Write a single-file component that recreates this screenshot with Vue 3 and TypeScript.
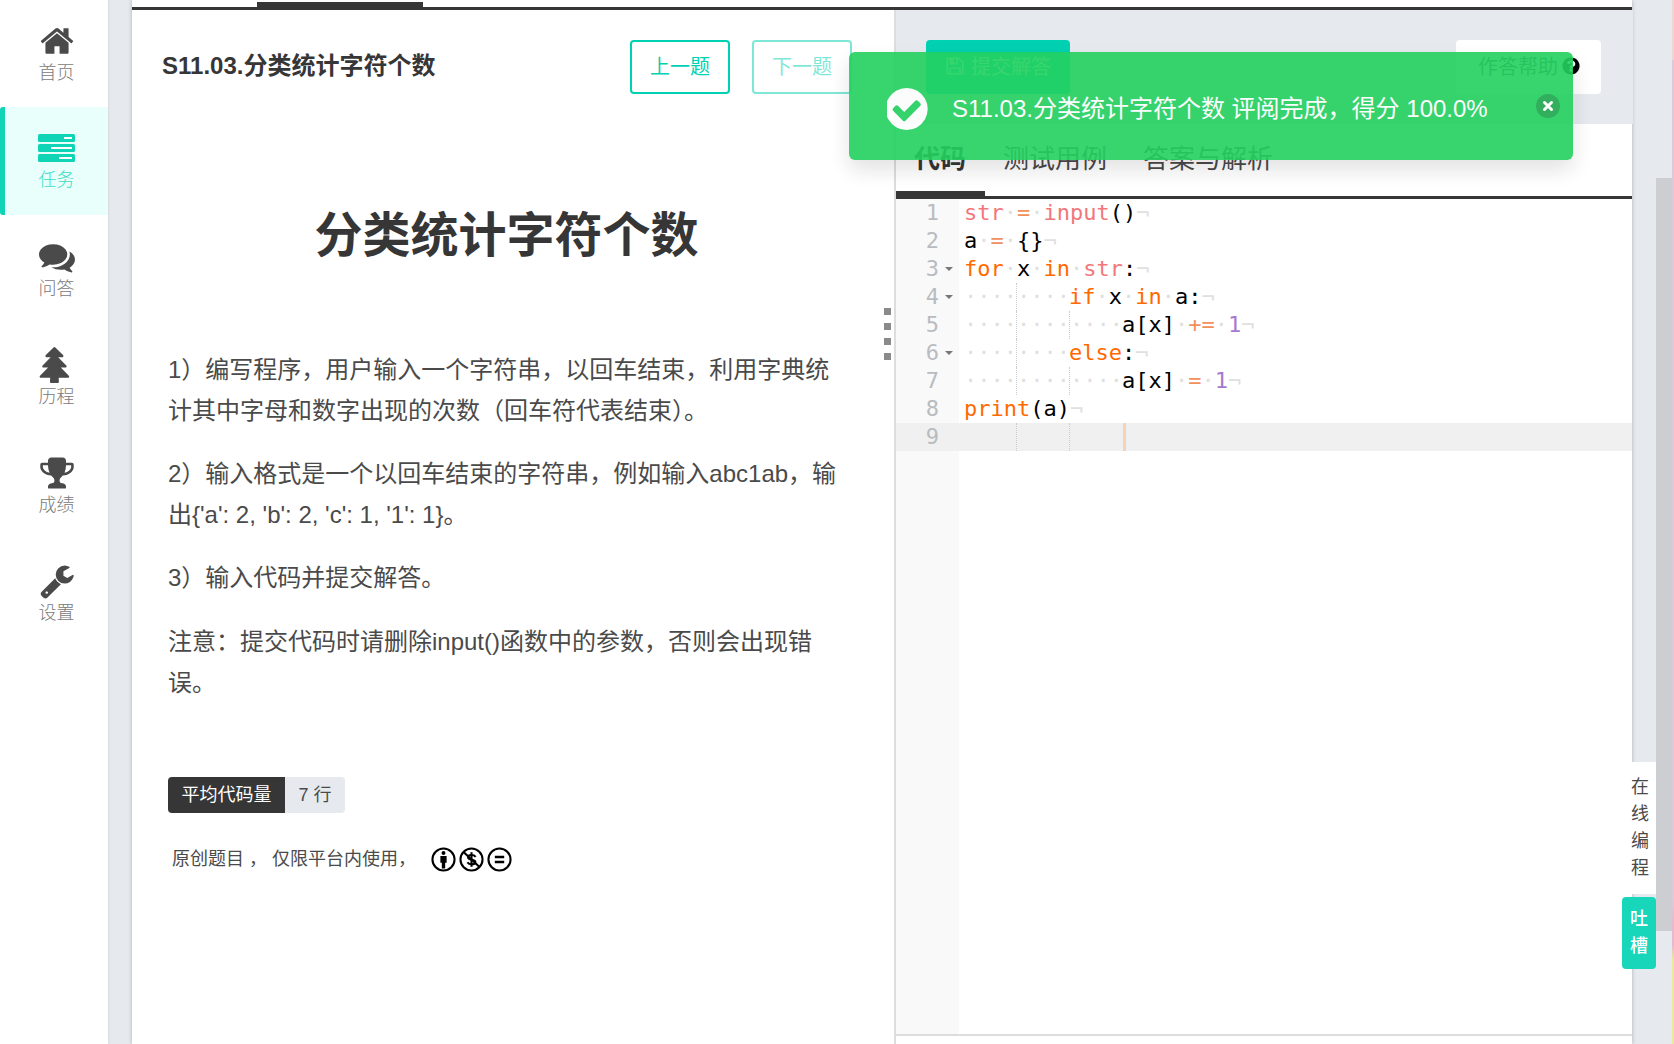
<script setup lang="ts">
interface NavItem { label: string; icon: string; active?: boolean }
const paths: Record<string, string> = {
  home: 'M1472 992v480q0 26-19 45t-45 19h-384v-384h-256v384h-384q-26 0-45-19t-19-45v-480q0-1 .5-3t.5-3l575-474 575 474q1 2 1 6zm223-69l-62 74q-8 9-21 11h-3q-13 0-21-7l-692-577-692 577q-12 8-24 7-13-2-21-11l-62-74q-8-10-7-23.5t11-21.5l719-599q32-26 76-26t76 26l244 204v-195q0-14 9-23t23-9h192q14 0 23 9t9 23v408l219 182q10 8 11 21.5t-7 23.5z',
  comments: 'M1408 768q0 139-94 257t-256.5 186.5-353.5 68.5q-86 0-176-16-124 88-278 128-36 9-86 16h-3q-11 0-20.5-8t-11.5-21q-1-3-1-6.5t.5-6.5 2-6l2.5-5 3.5-5.5 4-5 4.5-5 4-4.5q5-6 23-25t26-29.5 22.5-29 25-38.5 20.5-44q-124-72-195-177t-71-224q0-139 94-257t256.5-186.5 353.5-68.5 353.5 68.5 256.5 186.5 94 257zm384 256q0 120-71 224.5t-195 176.5q10 24 20.5 44t25 38.5 22.5 29 26 29.5 23 25q1 1 4 4.5t4.5 5 4 5 3.5 5.5l2.5 5 2 6 .5 6.5-1 6.5q-3 14-13 22t-22 7q-50-7-86-16-154-40-278-128-90 16-176 16-271 0-472-132 58 4 88 4 161 0 309-45t264-129q125-92 192-212t67-254q0-77-23-152 129 71 204 178t75 230z',
  tree: 'M1504 1472q0 26-19 45t-45 19h-462q1 17 6 87.5t5 108.5q0 25-18 42.5t-43 17.5h-320q-25 0-43-17.5t-18-42.5q0-38 5-108.5t6-87.5h-462q-26 0-45-19t-19-45 19-45l402-403h-229q-26 0-45-19t-19-45 19-45l402-403h-197q-26 0-45-19t-19-45 19-45l384-384q19-19 45-19t45 19l384 384q19 19 19 45t-19 45-45 19h-197l402 403q19 19 19 45t-19 45-45 19h-229l402 403q19 19 19 45z',
  trophy: 'M522 883q-74-162-74-371h-256v96q0 78 94.5 162t235.5 113zm1078-275v-96h-256q0 209-74 371 141-29 235.5-113t94.5-162zm128-128v128q0 71-41.5 143t-112 130-173 97.5-215.5 44.5q-42 54-95 95-38 34-52.5 72.5t-14.5 89.5q0 54 30.5 91t97.5 37q75 0 133.5 45.5t58.5 114.5v64q0 14-9 23t-23 9h-832q-14 0-23-9t-9-23v-64q0-69 58.5-114.5t133.5-45.5q67 0 97.5-37t30.5-91q0-51-14.5-89.5t-52.5-72.5q-53-41-95-95-113-5-215.5-44.5t-173-97.5-112-130-41.5-143v-128q0-40 28-68t68-28h288v-96q0-66 47-113t113-47h576q66 0 113 47t47 113v96h288q40 0 68 28t28 68z',
  wrench: 'M448 1472q0-26-19-45t-45-19-45 19-19 45 19 45 45 19 45-19 19-45zm644-420l-682 682q-37 37-90 37-52 0-91-37l-106-108q-38-36-38-90 0-53 38-91l681-681q39 98 114.5 173.5t173.5 114.5zm634-435q0 39-23 106-47 134-164.5 217.5t-258.5 83.5q-185 0-316.5-131.5t-131.5-316.5 131.5-316.5 316.5-131.5q58 0 121.5 16.5t107.5 46.5q16 11 16 28t-16 28l-293 169v224l193 107q5-3 79-48.5t135.5-81 70.5-35.5q15 0 23.5 10t8.5 25z',
}
const save = 'M512 1536h768v-384h-768v384zm896 0h128v-896q0-14-10-38.5t-20-34.5l-281-281q-10-10-34-20t-39-10v416q0 40-28 68t-68 28h-576q-40 0-68-28t-28-68v-416h-128v1280h128v-416q0-40 28-68t68-28h832q40 0 68 28t28 68v416zm-384-928v-320q0-13-9.5-22.5t-22.5-9.5h-192q-13 0-22.5 9.5t-9.5 22.5v320q0 13 9.5 22.5t22.5 9.5h192q13 0 22.5-9.5t9.5-22.5zm640 32v928q0 40-28 68t-68 28h-1344q-40 0-68-28t-28-68v-1344q0-40 28-68t68-28h928q40 0 88 20t76 48l280 280q28 28 48 76t20 88z'
const checkCircle = 'M1412 734q0-28-18-46l-91-90q-19-19-45-19t-45 19l-408 407-226-226q-19-19-45-19t-45 19l-91 90q-18 18-18 46 0 27 18 45l362 362q19 19 45 19 27 0 46-19l543-543q18-18 18-45zm252 162q0 209-103 385.5t-279.5 279.5-385.5 103-385.5-103-279.5-279.5-103-385.5 103-385.5 279.5-279.5 385.5-103 385.5 103 279.5 279.5 103 385.5z'
const question = 'M1024 1376v-192q0-14-9-23t-23-9h-192q-14 0-23 9t-9 23v192q0 14 9 23t23 9h192q14 0 23-9t9-23zm256-672q0-88-55.5-163t-138.5-116-170-41q-243 0-371 213-15 24 8 42l132 100q7 6 19 6 16 0 25-12 53-68 86-92 34-24 86-24 48 0 85.5 26t37.5 59q0 38-20 61t-68 45q-63 28-115.5 86.5t-52.5 125.5v36q0 14 9 23t23 9h192q14 0 23-9t9-23q0-19 21.5-49.5t54.5-49.5q32-18 49-28.5t46-35 44.5-48 28-60.5 12.5-81zm384 192q0 209-103 385.5t-279.5 279.5-385.5 103-385.5-103-279.5-279.5-103-385.5 103-385.5 279.5-279.5 385.5-103 385.5 103 279.5 279.5 103 385.5z'

const nav: NavItem[] = [
  { label: '首页', icon: 'home' },
  { label: '任务', icon: 'tasks', active: true },
  { label: '问答', icon: 'comments' },
  { label: '历程', icon: 'tree' },
  { label: '成绩', icon: 'trophy' },
  { label: '设置', icon: 'wrench' },
]

type Tok = { t: string; c?: string }
interface Line { n: number; fold?: boolean; guides: number; toks: Tok[]; active?: boolean; end?: boolean }
const dot: Tok = { t: '·', c: 'inv' }
const lines: Line[] = [
  { n: 1, guides: 0, end: true, toks: [{ t: 'str', c: 'var' }, dot, { t: '=', c: 'op' }, dot, { t: 'input', c: 'var' }, { t: '()' }] },
  { n: 2, guides: 0, end: true, toks: [{ t: 'a' }, dot, { t: '=', c: 'op' }, dot, { t: '{}' }] },
  { n: 3, fold: true, guides: 0, end: true, toks: [{ t: 'for', c: 'kw' }, dot, { t: 'x' }, dot, { t: 'in', c: 'kw' }, dot, { t: 'str', c: 'var' }, { t: ':' }] },
  { n: 4, fold: true, guides: 2, end: true, toks: [{ t: 'if', c: 'kw' }, dot, { t: 'x' }, dot, { t: 'in', c: 'kw' }, dot, { t: 'a' }, { t: ':' }] },
  { n: 5, guides: 3, end: true, toks: [{ t: 'a[x]' }, dot, { t: '+=', c: 'op' }, dot, { t: '1', c: 'num' }] },
  { n: 6, fold: true, guides: 2, end: true, toks: [{ t: 'else', c: 'kw' }, { t: ':' }] },
  { n: 7, guides: 3, end: true, toks: [{ t: 'a[x]' }, dot, { t: '=', c: 'op' }, dot, { t: '1', c: 'num' }] },
  { n: 8, guides: 0, end: true, toks: [{ t: 'print', c: 'kw' }, { t: '(a)' }] },
  { n: 9, guides: 3, active: true, toks: [] },
]
</script>

<template>
  <div class="page">
    <aside class="sidebar">
      <a v-for="item in nav" :key="item.label" class="nav-item" :class="{ active: item.active }">
        <svg v-if="item.icon === 'tasks'" class="nav-icon tasks" viewBox="0 0 37 28">
          <rect x="0" y="0" width="37" height="8" rx="1.5" />
          <rect x="0" y="10" width="37" height="8" rx="1.5" />
          <rect x="0" y="20" width="37" height="8" rx="1.5" />
          <rect x="26" y="3" width="8" height="2" fill="#fff" />
          <rect x="13" y="13" width="21" height="2" fill="#fff" />
          <rect x="21" y="23" width="13" height="2" fill="#fff" />
        </svg>
        <svg v-else class="nav-icon" viewBox="0 0 1792 1792"><path :d="paths[item.icon]" /></svg>
        <span class="nav-label">{{ item.label }}</span>
      </a>
    </aside>

    <main class="main">
      <div class="top-strip"><span class="top-active"></span></div>
      <div class="panels">
        <section class="left">
          <header class="left-head">
            <h2 class="task-title">S11.03.分类统计字符个数</h2>
            <button class="btn outline">上一题</button>
            <button class="btn outline faded">下一题</button>
          </header>
          <h1 class="problem-title">分类统计字符个数</h1>
          <div class="problem">
            <p>1）编写程序，用户输入一个字符串，以回车结束，利用字典统计其中字母和数字出现的次数（回车符代表结束）。</p>
            <p>2）输入格式是一个以回车结束的字符串，例如输入abc1ab，输出{'a': 2, 'b': 2, 'c': 1, '1': 1}。</p>
            <p>3）输入代码并提交解答。</p>
            <p>注意：提交代码时请删除input()函数中的参数，否则会出现错误。</p>
          </div>
          <div class="tags"><span class="tag dark">平均代码量</span><span class="tag light">7 行</span></div>
          <div class="license">
            <span class="license-text">原创题目 ， 仅限平台内使用，</span>
            <svg class="cc" viewBox="0 0 24 24">
              <circle cx="12" cy="12" r="10.6" />
              <circle cx="12" cy="5.8" r="1.9" class="solid" />
              <path class="solid" d="M9 8.6h6v6.4h-1.4v5.6h-3.2V15H9z" />
            </svg>
            <svg class="cc" viewBox="0 0 24 24">
              <circle cx="12" cy="12" r="10.6" />
              <path d="M4.6 5 19.4 19" />
              <path d="M16 9.4c-1-1.3-2.4-1.8-4-1.8-1.8 0-3.3.8-3.3 2.3 0 3.2 7 1.4 7 4.4 0 1.5-1.6 2.3-3.5 2.3-1.7 0-3.3-.7-4.1-2" />
              <path d="M12 5v14" />
            </svg>
            <svg class="cc" viewBox="0 0 24 24">
              <circle cx="12" cy="12" r="10.6" />
              <path d="M7.5 9.6h9M7.5 14.4h9" stroke-width="2.4" />
            </svg>
          </div>
          <div class="handle"><i></i><i></i><i></i><i></i></div>
        </section>

        <section class="right">
          <div class="toolbar">
            <button class="btn primary">
              <svg class="btn-icon" viewBox="0 0 1792 1792"><path :d="save" /></svg>提交解答
            </button>
            <button class="btn help">
              作答帮助<svg class="help-icon" viewBox="0 0 1792 1792"><path :d="question" /></svg>
            </button>
          </div>
          <nav class="tabs">
            <span class="tab current">代码</span>
            <span class="tab">测试用例</span>
            <span class="tab">答案与解析</span>
          </nav>
          <div class="editor">
            <div class="gutter">
              <div v-for="l in lines" :key="l.n" class="gutter-cell" :class="{ on: l.active, fold: l.fold }">{{ l.n }}</div>
            </div>
            <div class="code">
              <div v-for="l in lines" :key="l.n" class="code-line" :class="{ on: l.active }">
                <template v-if="l.n >= 4 && l.n <= 7">
                  <span class="indent first inv">····</span>
                  <span class="indent inv guide">····</span>
                  <span v-if="l.guides === 3" class="indent inv guide">····</span>
                </template>
                <template v-if="l.n === 9">
                  <span class="indent first"></span>
                  <span class="indent guide"></span>
                  <span class="indent guide"></span>
                  <span class="cursor"></span>
                </template>
                <span v-for="(tok, i) in l.toks" :key="i" :class="tok.c">{{ tok.t }}</span>
                <span v-if="l.end" class="inv eol">¬</span>
              </div>
            </div>
          </div>
        </section>
      </div>
    </main>

    <div class="rail"><div class="thumb"></div></div>
    <div class="sliver"></div>

    <div class="side-tabs">
      <span class="side-tab plain">在<br />线<br />编<br />程</span>
      <span class="side-tab teal">吐<br />槽</span>
    </div>

    <div class="toast">
      <svg class="toast-icon" viewBox="224 128 1440 1536"><path :d="checkCircle" /></svg>
      <span class="toast-text">S11.03.分类统计字符个数 评阅完成，得分 100.0%</span>
      <span class="toast-close">
        <svg viewBox="0 0 12 12"><path d="M2.5 2.5l7 7M9.5 2.5l-7 7" /></svg>
      </span>
    </div>
  </div>
</template>

<style>
html, body { margin: 0; height: 100%; overflow: hidden; }
</style>

<style scoped>
.page {
  position: relative;
  display: flex;
  width: 1674px;
  height: 1044px;
  overflow: hidden;
  background: #e6e9ee;
  color: #4a4a4a;
  font-family: "Liberation Sans", "Noto Sans CJK SC", sans-serif;
}
.sidebar {
  width: 108px;
  flex: none;
  margin-right: 24px;
  background: #fff;
  box-shadow: 0 0 3px rgba(0, 0, 0, .12);
}
.nav-item {
  position: relative;
  display: flex;
  flex-direction: column;
  align-items: center;
  height: 108px;
  box-sizing: border-box;
  padding: 24px 0 0 5px;
  color: #4a4a4a;
}
.nav-item:first-child { margin-top: -1px; }
.nav-item.active { background: #e8fffc; color: #0fd5b6; }
.nav-item.active::before {
  content: "";
  position: absolute;
  left: 0;
  top: 0;
  bottom: 0;
  width: 5px;
  border-radius: 3px 0 0 3px;
  background: #0fd5b6;
}
.nav-icon { width: 36px; height: 36px; fill: currentColor; display: block; }
.nav-icon.tasks { width: 37px; height: 28px; margin: 3px 0 4px; }
.nav-label {
  margin-top: 1px;
  font-size: 18px;
  line-height: 26px;
  font-weight: 300;
  color: #7a7a7a;
}
.active .nav-label { color: #3fdcc3; }

.main {
  width: 1500px;
  flex: none;
  display: flex;
  flex-direction: column;
  background: #fff;
  box-shadow: 0 0 4px rgba(0, 0, 0, .25);
}
.top-strip {
  height: 10px;
  box-sizing: border-box;
  border-bottom: 3px solid #363636;
  padding-left: 125px;
  flex: none;
}
.top-active {
  display: block;
  width: 166px;
  height: 8px;
  margin-top: 2px;
  background: #363636;
}
.panels { flex: 1; display: flex; min-height: 0; }
.left {
  position: relative;
  width: 764px;
  flex: none;
  box-sizing: border-box;
  padding: 30px 44px 0 36px;
  border-right: 2px solid #ddd;
}
.left-head {
  display: flex;
  align-items: center;
  height: 54px;
  margin-left: -6px;
}
.task-title {
  margin: -3px 0 0;
  flex: 1;
  font-size: 24px;
  line-height: 36px;
  font-weight: 700;
  color: #363636;
}
.btn {
  height: 54px;
  box-sizing: border-box;
  border-radius: 4px;
  font: inherit;
  font-size: 20px;
  padding: 0 0 3px;
  display: inline-flex;
  align-items: center;
  justify-content: center;
  cursor: pointer;
}
.btn.outline {
  width: 100px;
  margin-right: 22px;
  background: #fff;
  color: #00d1b2;
  border: 2px solid #00d1b2;
}
.btn.outline.faded { opacity: .5; margin-right: -2px; }
.problem-title {
  margin: 106px 0 0 -5px;
  text-align: center;
  font-size: 48px;
  line-height: 72px;
  font-weight: 700;
  color: #363636;
}
.problem { margin-top: 78px; font-size: 24px; line-height: 40.8px; }
.problem p { margin: 0 0 22.6px; }
.tags { display: flex; margin-top: 74px; }
.tag {
  height: 36px;
  font-size: 18px;
  line-height: 36px;
  padding: 0 13.5px;
}
.tag.dark { background: #363636; color: #fff; border-radius: 4px 0 0 4px; }
.tag.light { background: #e6e9ee; color: #4a4a4a; border-radius: 0 4px 4px 0; }
.license {
  display: flex;
  align-items: center;
  margin: 28px 0 0 4px;
  font-size: 18px;
  line-height: 36px;
}
.license-text { margin-right: 15px; white-space: pre; }
.cc {
  width: 25px;
  height: 25px;
  margin-right: 3px;
  fill: none;
  stroke: #000;
  stroke-width: 2;
}
.cc .solid { fill: #000; stroke: none; }
.handle {
  position: absolute;
  right: 3px;
  top: 298px;
  display: flex;
  flex-direction: column;
  gap: 8px;
}
.handle i { display: block; width: 7px; height: 7px; background: #8a8a8a; }

.right { flex: 1; display: flex; flex-direction: column; min-width: 0; }
.toolbar {
  flex: none;
  height: 114px;
  box-sizing: border-box;
  padding: 30px 32px 0 30px;
  margin-right: -1px;
  background: #e6e9ee;
  display: flex;
  justify-content: space-between;
}
.btn.primary {
  width: 144px;
  border: 0;
  background: #00d1b2;
  color: #fff;
}
.btn-icon { width: 20px; height: 20px; fill: currentColor; margin-right: 6px; }
.btn.help {
  width: 145px;
  border: 0;
  background: #fff;
  color: #4a4a4a;
  justify-content: flex-start;
  padding-left: 22px;
}
.help-icon { width: 20px; height: 20px; fill: #000; margin-left: 3px; }
.tabs {
  flex: none;
  position: relative;
  height: 75px;
  box-sizing: border-box;
  border-bottom: 3px solid #363636;
  display: flex;
  align-items: center;
}
.tab {
  font-size: 26px;
  line-height: 36px;
  margin-top: -2px;
  padding: 0 18px;
  color: #4a4a4a;
}
.tab.current {
  font-weight: 700;
  color: #363636;
  width: 53px;
  white-space: nowrap;
}
.tab.current::after {
  content: "";
  position: absolute;
  left: 0;
  width: 89px;
  bottom: -3px;
  height: 8px;
  background: #363636;
}
.editor {
  height: 835px;
  flex: none;
  display: flex;
  border-bottom: 2px solid #ddd;
  font-family: "DejaVu Sans Mono", "Liberation Mono", monospace;
  font-size: 22px;
  line-height: 28px;
  color: #000;
}
.gutter {
  width: 63px;
  flex: none;
  background: #f9f9f9;
  color: #b8bcc0;
}
.gutter-cell {
  position: relative;
  height: 28px;
  text-align: right;
  padding-right: 20px;
}
.gutter-cell.on { background: #f0f0f0; }
.gutter-cell.fold::after {
  content: "";
  position: absolute;
  right: 6px;
  top: 12px;
  border-left: 4px solid transparent;
  border-right: 4px solid transparent;
  border-top: 4px solid #777;
}
.code { flex: 1; min-width: 0; white-space: pre; }
.code-line { position: relative; height: 28px; padding-left: 5px; display: flex; }
.code-line.on { background: #f0f0f0; }
.indent { display: inline-block; width: 53px; height: 28px; box-sizing: border-box; overflow: hidden; }
.indent.first { width: 52px; }
.guide { border-left: 1px dotted #ccc; }
.cursor {
  width: 3px;
  height: 28px;
  margin-left: 1px;
  background: #f6d3b8;
}
.var { color: #f2777a; }
.op { color: #f0905c; }
.kw { color: #ff6a00; }
.num { color: #a678d0; }
.inv { color: #e0e0e0; }

.rail { flex: none; width: 16px; margin-left: 24px; padding-top: 178px; }
.thumb { height: 753px; background: #cdced2; }
.sliver {
  flex: none;
  width: 2px;
  background: linear-gradient(#efd6d2 0, #efd6d2 60px, #ddc9da 60px, #ddc9da 900px, #e8b8cf 925px, #e8b8cf 945px, #ece8a0 960px);
}

.side-tabs {
  position: absolute;
  right: 18px;
  top: 762px;
  display: flex;
  flex-direction: column;
  align-items: flex-end;
  gap: 3px;
  font-size: 18px;
  line-height: 27px;
}
.side-tab { display: block; box-sizing: border-box; }
.side-tab.plain {
  width: 25px;
  height: 132px;
  padding-top: 12px;
  background: #fff;
  color: #4a4a4a;
  text-align: left;
}
.side-tab.teal {
  width: 34px;
  height: 72px;
  padding-top: 9px;
  background: #17d6ba;
  color: #fff;
  border-radius: 4px;
  text-align: center;
  font-weight: 500;
}

.toast {
  position: absolute;
  left: 849px;
  top: 52px;
  width: 724px;
  height: 108px;
  box-sizing: border-box;
  display: flex;
  align-items: center;
  padding: 6px 0 0 38px;
  background: #23d160;
  border-radius: 6px;
  opacity: .9;
  color: #fff;
  box-shadow: 0 10px 20px rgba(0, 0, 0, .12);
}
.toast-icon { width: 42px; height: 42px; fill: #fff; margin-right: 23px; flex: none; }
.toast-text { font-size: 24px; line-height: 36px; white-space: nowrap; }
.toast-close {
  position: absolute;
  right: 13px;
  top: 42px;
  width: 24px;
  height: 24px;
  border-radius: 50%;
  background: rgba(10, 10, 10, .2);
  display: flex;
  align-items: center;
  justify-content: center;
}
.toast-close svg { width: 12px; height: 12px; fill: none; stroke: #fff; stroke-width: 3; stroke-linecap: round; }
</style>
